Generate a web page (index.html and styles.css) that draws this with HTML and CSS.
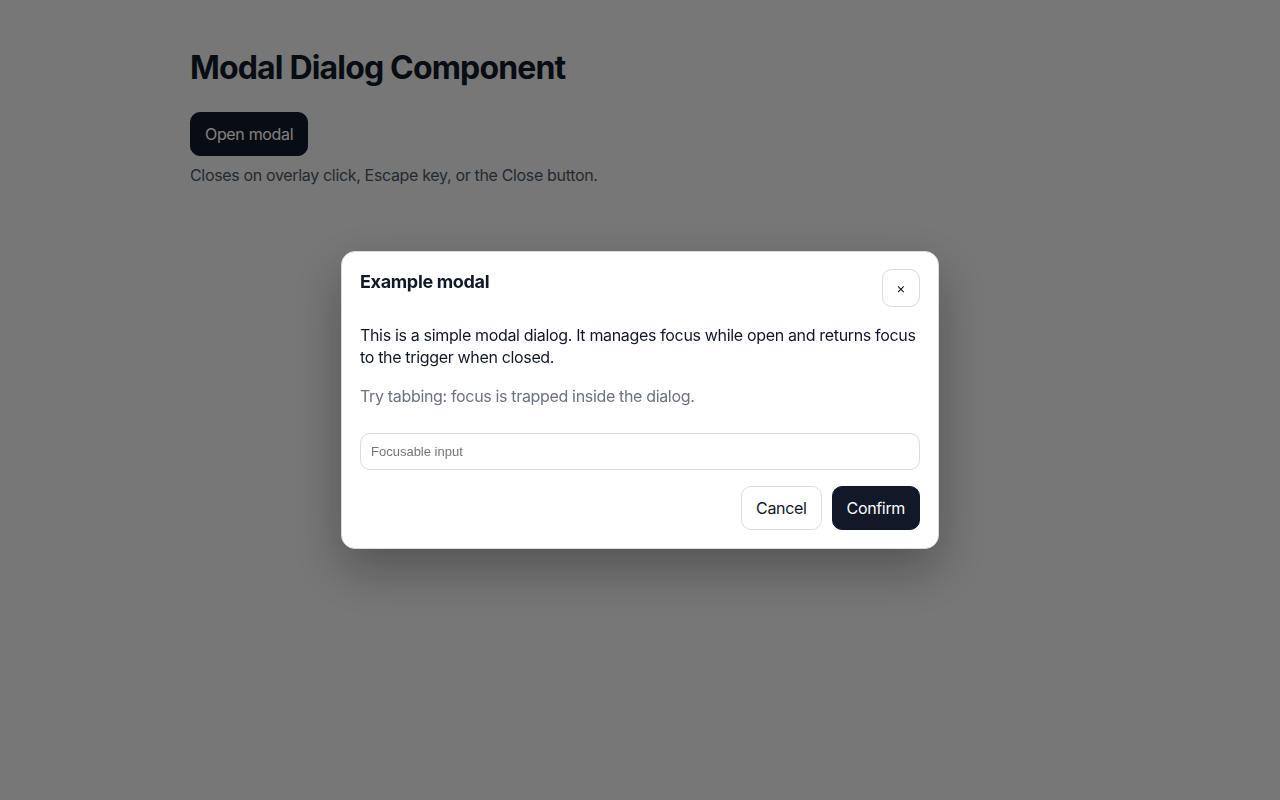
FILE: index.html
```html
<!DOCTYPE html>
<html lang="en">
<head>
<meta charset="utf-8">
<title>Modal Dialog Component</title>
<link rel="stylesheet" href="styles.css">
</head>
<body>
<main class="page">
  <h1 class="page-title">Modal Dialog Component</h1>
  <button class="btn btn-primary" type="button">Open modal</button>
  <p class="hint">Closes on overlay click, Escape key, or the Close button.</p>
</main>

<div class="overlay">
  <div class="modal" role="dialog" aria-modal="true" aria-labelledby="modal-title">
    <div class="modal-header">
      <h2 class="modal-title" id="modal-title">Example modal</h2>
      <button class="close-btn" type="button" aria-label="Close">×</button>
    </div>
    <p class="modal-text">This is a simple modal dialog. It manages focus while open and returns focus to the trigger when closed.</p>
    <p class="modal-muted">Try tabbing: focus is trapped inside the dialog.</p>
    <input class="modal-input" type="text" placeholder="Focusable input">
    <div class="modal-actions">
      <button class="btn btn-secondary" type="button">Cancel</button>
      <button class="btn btn-primary" type="button">Confirm</button>
    </div>
  </div>
</div>
</body>
</html>
```

FILE: styles.css
```css
* {
  box-sizing: border-box;
}

html, body {
  margin: 0;
  height: 100%;
}

body {
  background: #eeeeee;
  font-family: Inter, "Liberation Sans", Arial, sans-serif;
  letter-spacing: -0.021em;
  color: #111827;
}

.page {
  max-width: 900px;
  margin: 0 auto;
  padding: 48px 0 0;
}

.page-title {
  margin: 0 0 24px;
  font-size: 32px;
  line-height: 40px;
  font-weight: 700;
  letter-spacing: -0.026em;
  color: #111827;
}

.btn {
  font-family: inherit;
  letter-spacing: inherit;
  font-size: 16px;
  line-height: 22px;
  padding: 10px 14px;
  border-radius: 10px;
  border: 1px solid transparent;
  cursor: pointer;
}

.btn-primary {
  background: #111827;
  color: #ffffff;
  border-color: #111827;
}

.btn-secondary {
  background: #ffffff;
  color: #111827;
  border-color: #d9dbe0;
}

.hint {
  margin: 8px 0 0;
  font-size: 16px;
  line-height: 22px;
  color: #4b5563;
}

.overlay {
  position: fixed;
  inset: 0;
  background: rgba(0, 0, 0, 0.5);
  display: flex;
  align-items: center;
  justify-content: center;
}

.modal {
  width: 598px;
  background: #ffffff;
  border: 1px solid #d9dbe0;
  border-radius: 14px;
  padding: 17px 18px 18px;
  box-shadow: 0 20px 50px rgba(0, 0, 0, 0.3);
}

.modal-header {
  display: flex;
  justify-content: space-between;
  align-items: flex-start;
}

.modal-title {
  margin: 0;
  padding-top: 1px;
  font-size: 18px;
  line-height: 24px;
  font-weight: 700;
  color: #111827;
}

.close-btn {
  width: 38px;
  height: 38px;
  border: 1px solid #d9dbe0;
  border-radius: 10px;
  background: #ffffff;
  color: #111827;
  font-family: inherit;
  font-size: 14px;
  line-height: 1;
  padding: 0;
  display: flex;
  align-items: center;
  justify-content: center;
  cursor: pointer;
}

.modal-text {
  margin: 17px 0 0;
  font-size: 16px;
  line-height: 22px;
  color: #111827;
}

.modal-muted {
  margin: 17px 0 0;
  font-size: 16px;
  line-height: 22px;
  color: #6b7280;
}

.modal-input {
  display: block;
  width: 100%;
  height: 37px;
  margin-top: 26px;
  padding: 0 10px;
  border: 1px solid #d9dbe0;
  border-radius: 10px;
  font-family: "Liberation Sans", Arial, sans-serif;
  letter-spacing: 0;
  font-size: 13px;
  color: #111827;
  background: #ffffff;
}

.modal-input::placeholder {
  color: #757575;
}

.modal-actions {
  display: flex;
  justify-content: flex-end;
  gap: 10px;
  margin-top: 16px;
}
```
